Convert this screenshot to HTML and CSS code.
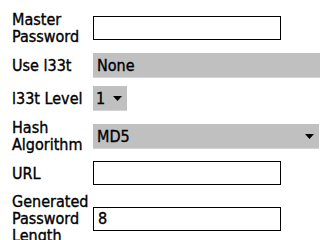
FILE: index.html
```html
<!DOCTYPE html>
<html>
<head>
<meta charset="utf-8">
<link rel="stylesheet" href="styles.css">
</head>
<body>
<div class="form">
  <div class="row">
    <div class="label">Master<br>Password</div>
    <div class="input"></div>
  </div>
  <div class="row">
    <div class="label">Use l33t</div>
    <div class="select wide"><span>None</span></div>
  </div>
  <div class="row">
    <div class="label">l33t Level</div>
    <div class="select small"><span>1</span><svg class="arrow" width="9" height="5" viewBox="0 0 9 5"><polygon points="0,0 9,0 4.5,5" fill="#000"/></svg></div>
  </div>
  <div class="row">
    <div class="label">Hash<br>Algorithm</div>
    <div class="select hash"><span>MD5</span><svg class="arrow" width="9" height="5" viewBox="0 0 9 5"><polygon points="0,0 9,0 4.5,5" fill="#000"/></svg></div>
  </div>
  <div class="row">
    <div class="label">URL</div>
    <div class="input"></div>
  </div>
  <div class="row">
    <div class="label">Generated<br>Password<br>Length</div>
    <div class="input"><span>8</span></div>
  </div>
</div>
</body>
</html>
```
FILE: styles.css
```css
html, body {
  margin: 0;
  padding: 0;
  background: #fff;
  overflow: hidden;
}
body {
  font-family: "DejaVu Sans Condensed", "DejaVu Sans", sans-serif;
  font-size: 16px;
  color: #000;
  width: 320px;
  height: 240px;
  -webkit-text-stroke: 0.35px #000;
}
.form {
  display: flex;
  flex-direction: column;
  gap: 8px;
  padding: 11px 0 0 12px;
}
.row {
  display: flex;
  align-items: center;
}
.label {
  width: 81px;
  flex: none;
  line-height: 17px;
}
.input {
  width: 188px;
  height: 24px;
  box-sizing: border-box;
  border: 1px solid #000;
  background: #fff;
  display: flex;
  align-items: center;
  padding-left: 4px;
  flex: none;
}
.select {
  height: 25px;
  box-sizing: border-box;
  background: #c0c0c0;
  display: flex;
  align-items: center;
  justify-content: space-between;
  padding: 0 5px 0 4px;
  flex: none;
  box-shadow: inset 0 -3px 0 -2px #d4d4d4;
}
.wide {
  width: 240px;
}
.small {
  width: 34px;
  padding-left: 3px;
}
.hash {
  width: 226px;
}
.arrow {
  display: block;
}
```
